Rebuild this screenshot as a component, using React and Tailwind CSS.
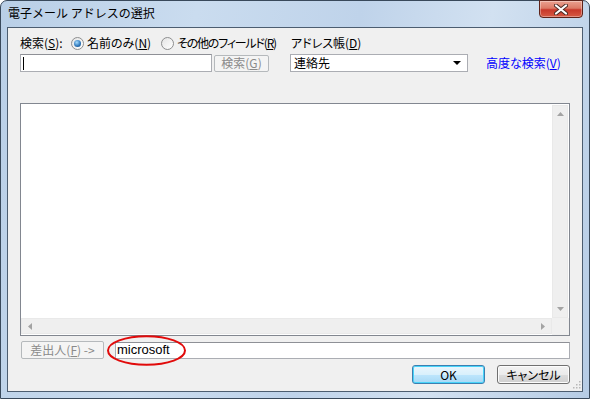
import React from "react";

const jp = "font-['Noto_Sans_CJK_JP','Noto_Sans',sans-serif]";
const palt = "[font-feature-settings:'palt']";

const U = ({ children }) => <span className="underline underline-offset-[1px]">{children}</span>;

const Radio = ({ checked }) => (
  <span className="w-[13px] h-[13px] rounded-full border border-[#8d8e8f] bg-[linear-gradient(135deg,#e4e4e4,#ffffff)] flex items-center justify-center shrink-0">
    {checked && (
      <span className="w-[7px] h-[7px] rounded-full bg-[radial-gradient(circle_at_40%_35%,#a5dcff,#2a73b8_60%,#17466f)]" />
    )}
  </span>
);

const Arrow = ({ dir }) => {
  const pts = {
    up: "0,4 3.5,0 7,4",
    down: "0,0 3.5,4 7,0",
    left: "4,0 0,3.5 4,7",
    right: "0,0 4,3.5 0,7",
  }[dir];
  const vert = dir === "up" || dir === "down";
  return (
    <svg width={vert ? 7 : 4} height={vert ? 4 : 7}>
      <polygon points={pts} fill="#a3a3a3" />
    </svg>
  );
};

const CloseButton = () => (
  <div className="w-[44px] h-[18px] mr-[6px] -mt-[1px] rounded-b-[4px] border border-[#5e2219] bg-[linear-gradient(#eba190,#dc7a66_45%,#c8382a_55%,#d65a44)] flex items-center justify-center shadow-[inset_0_0_0_1px_rgba(255,255,255,0.35)]">
    <svg width="14" height="11" viewBox="0 0 14 11">
      <path d="M2 1.5 L12 9.5 M12 1.5 L2 9.5" stroke="#4a2a24" strokeWidth="4" strokeLinecap="round" />
      <path d="M2 1.5 L12 9.5 M12 1.5 L2 9.5" stroke="#ffffff" strokeWidth="2.2" strokeLinecap="round" />
    </svg>
  </div>
);

export default function App() {
  return (
    <div className={`w-[590px] h-[399px] flex flex-col border border-[#39495b] rounded-t-[7px] bg-[linear-gradient(100deg,#b9cfe7,#cadcef_30%,#bfd3ea_55%,#d2e1f1_75%,#b6cce5)] whitespace-nowrap ${jp}`}>
      {/* title bar */}
      <div className="h-[26px] flex items-start shrink-0">
        <div className="pl-[7px] pt-[4px] text-[12px] leading-[16px] text-black">電子メール アドレスの選択</div>
        <div className="ml-auto">
          <CloseButton />
        </div>
      </div>

      {/* client area */}
      <div className={`relative mx-[6px] mb-[6px] flex-1 border border-[#4c5d70] bg-[#f0f0f0] px-[12px] text-[12px] text-black ${palt}`}>
        {/* row 1 */}
        <div className="mt-[6px] h-[18px] flex items-center">
          <div className="w-[270px] shrink-0 flex items-center">
            <span className="w-[51px] shrink-0">
              検索(<U>S</U>):
            </span>
            <span className="w-[90px] shrink-0 flex items-center">
              <Radio checked />
              <span className="ml-[3px]">
                名前のみ(<U>N</U>)
              </span>
            </span>
            <span className="flex items-center shrink-0">
              <Radio />
              <span className="ml-[3px] tracking-[-1.2px]">
                その他のフィールド(<U>R</U>)
              </span>
            </span>
          </div>
          <span className="pl-[1px]">
            アドレス帳(<U>D</U>)
          </span>
        </div>

        {/* row 2 */}
        <div className="mt-[2px] h-[18px] flex items-center">
          <div className="w-[192px] h-[18px] border border-[#abadb3] border-t-[#8e9096] bg-white flex items-center pl-[2px]">
            <span className="w-px h-[13px] bg-black" />
          </div>
          <div className="ml-[2px] w-[55px] h-[17px] rounded-[2px] border border-[#b5b9bc] bg-[#f4f4f4] text-[#8a8a8a] flex items-center justify-center">
            検索(<U>G</U>)
          </div>
          <div className="ml-[21px] w-[178px] h-[18px] border border-[#abadb3] bg-white flex items-center pl-[3px] pr-[6px]">
            <span>連絡先</span>
            <svg className="ml-auto" width="8" height="4">
              <polygon points="0,0 8,0 4,4" fill="#000" />
            </svg>
          </div>
          <span className="ml-[18px] text-[#0000ff]">
            高度な検索(<U>V</U>)
          </span>
        </div>

        {/* list */}
        <div className="mt-[31px] h-[233px] border border-[#828790] bg-white grid grid-cols-[1fr_17px] grid-rows-[1fr_17px]">
          <div />
          <div className="mr-px mt-px bg-[#efefef] border border-[#e9e9e9] flex flex-col items-center justify-between py-[6px]">
            <Arrow dir="up" />
            <Arrow dir="down" />
          </div>
          <div className="mb-px bg-[#efefef] border border-[#e9e9e9] flex items-center justify-between px-[6px]">
            <Arrow dir="left" />
            <Arrow dir="right" />
          </div>
          <div className="bg-[#f0f0f0]" />
        </div>

        {/* sender row */}
        <div className="relative mt-[5px] h-[18px] flex items-center">
          <div className="ml-[1px] w-[83px] h-[18px] rounded-[2px] border border-[#b5b9bc] bg-[#f4f4f4] text-[#8a8a8a] flex items-center justify-center">
            差出人(<U>F</U>) -&gt;
          </div>
          <div className="ml-[11px] flex-1 h-[17px] border border-[#abadb3] border-t-[#8e9096] bg-white flex items-center pl-[1px] font-['Liberation_Sans',sans-serif] text-[13px]">
            microsoft
          </div>
          <svg className="absolute left-[87px] -top-[6px]" width="80" height="31" viewBox="0 0 80 31">
            <ellipse cx="39.5" cy="15.5" rx="38.5" ry="14.3" fill="none" stroke="#e10a0a" strokeWidth="2" />
          </svg>
        </div>

        {/* buttons */}
        <div className="mt-[6px] h-[19px] flex justify-end">
          <div className="w-[73px] h-[19px] rounded-[3px] border border-[#3c7fb1] bg-[linear-gradient(#eaf6fd,#d9f0fc_50%,#bee6fd_50%,#a7d9f5)] shadow-[inset_0_0_0_1px_#48d4f9] flex items-center justify-center">
            OK
          </div>
          <div className="ml-[12px] w-[73px] h-[19px] rounded-[3px] border border-[#707070] bg-[linear-gradient(#f2f2f2,#ebebeb_50%,#dddddd_50%,#cfcfcf)] shadow-[inset_0_0_0_1px_#fcfcfc] flex items-center justify-center">
            キャンセル
          </div>
        </div>

        {/* resize grip */}
        <svg className="absolute right-[1px] bottom-[2px]" width="9" height="9">
          {[
            [7, 1],
            [7, 4],
            [4, 4],
            [7, 7],
            [4, 7],
            [1, 7],
          ].map(([x, y], i) => (
            <rect key={i} x={x} y={y} width="1.5" height="1.5" fill="#b8b8b8" />
          ))}
        </svg>
      </div>
    </div>
  );
}
